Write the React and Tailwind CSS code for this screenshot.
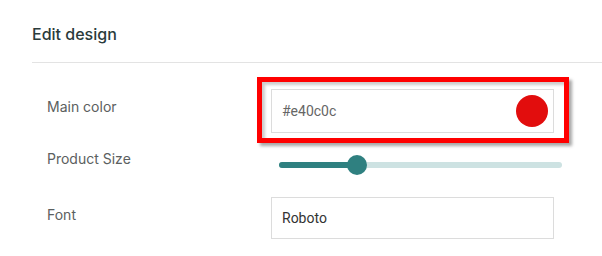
import React, { useState } from 'react'

export default function App() {
  const [color, setColor] = useState('#e40c0c')
  const [size, setSize] = useState(27.5)
  const [font, setFont] = useState('Roboto')

  return (
    <div className="w-[602px] h-[256px] bg-white overflow-hidden font-['Inter',sans-serif]">
      {/* Header */}
      <div className="pl-8 pt-[22px] pb-[16px]">
        <h2 className="text-[16px] leading-6 font-medium text-[#2a3b3b]">Edit design</h2>
      </div>
      <div className="ml-8 h-px bg-[#e3e3e3]" />

      {/* Form */}
      <div className="pl-[47px] pt-[26px] flex flex-col">
        {/* Main color */}
        <div className="flex items-start">
          <label className="w-[224px] pt-[8px] text-[14px] leading-5 text-[#5b6060]">Main color</label>
          <div className="relative">
            <div className="w-[283px] h-[44px] border border-[#dcdcdc] flex items-center justify-between pl-[10px] pr-[5px]">
              <input
                value={color}
                onChange={(e) => setColor(e.target.value)}
                className="w-[200px] outline-none text-[14px] text-[#666] font-['Roboto',sans-serif]"
              />
              <div className="w-8 h-8 rounded-full bg-[#e20d0d]" />
            </div>
            {/* highlight box */}
            <div className="absolute left-[-14px] top-[-12px] w-[312px] h-[66px] border-[5px] border-[#ff0000] shadow-[3px_3px_3px_rgba(0,0,0,0.35),inset_3px_3px_3px_rgba(0,0,0,0.2)] pointer-events-none" />
          </div>
        </div>

        {/* Product size */}
        <div className="flex items-start mt-[16px]">
          <label className="w-[224px] text-[14px] leading-5 text-[#5b6060]">Product Size</label>
          <div className="ml-2 w-[283px] h-5 mt-[6px] relative flex items-center">
            <div className="w-full h-[6px] rounded-full bg-[#cde2e2]" />
            <div
              className="absolute left-0 h-[6px] rounded-full bg-[#2f8080]"
              style={{ width: `${size}%` }}
            />
            <div
              className="absolute w-5 h-5 rounded-full bg-[#2f8080] -translate-x-1/2"
              style={{ left: `${size}%` }}
            />
            <input
              type="range"
              min="0"
              max="100"
              step="0.5"
              value={size}
              onChange={(e) => setSize(Number(e.target.value))}
              className="absolute inset-0 w-full opacity-0 cursor-pointer"
            />
          </div>
        </div>

        {/* Font */}
        <div className="flex items-start mt-[22px]">
          <label className="w-[224px] pt-[8px] text-[14px] leading-5 text-[#5b6060]">Font</label>
          <input
            value={font}
            onChange={(e) => setFont(e.target.value)}
            className="w-[283px] h-[42px] border border-[#dcdcdc] px-[10px] outline-none text-[14px] text-[#333] font-['Roboto',sans-serif]"
          />
        </div>
      </div>
    </div>
  )
}
